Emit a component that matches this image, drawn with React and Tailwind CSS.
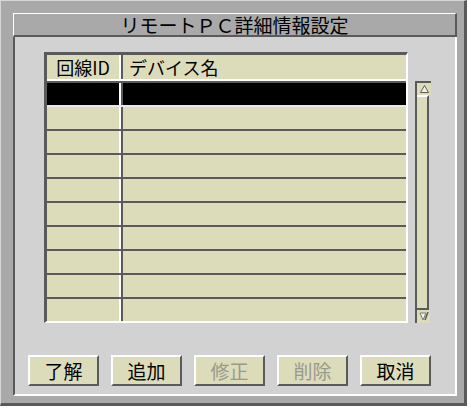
import React from 'react';

const DARK = 'border-[#5a5a5a]';

function Row({ selected, first }) {
  const fill = selected ? 'bg-black' : 'bg-[#dcdcbb]';
  const top = first ? 'border-t-[#e8e8e8]' : 'border-t-[#5a5a5a]';
  return (
    <div className={`flex h-[24px] border-t-2 ${top}`}>
      <div className={`w-[74px] border-r-2 border-white ${fill}`} />
      <div className={`flex-1 border-l-2 ${DARK} ${fill}`} />
    </div>
  );
}

function Btn({ label, disabled }) {
  return (
    <div
      className={`w-[71px] h-[31px] flex items-center justify-center bg-[#dcdcbb] border-t-2 border-l-2 border-white border-r-2 border-b-2 border-r-[#5a5a5a] border-b-[#5a5a5a] text-[19px] leading-none ${
        disabled ? 'text-[#9a9a8c]' : 'text-black'
      }`}
    >
      {label}
    </div>
  );
}

export default function App() {
  const rows = Array.from({ length: 10 }, (_, i) => i);
  return (
    <div className="w-[471px] h-[410px] bg-white font-['Noto_Sans_CJK_JP',sans-serif]">
      <div className="w-[467px] h-[406px] flex flex-col bg-[#a9a9a9] border-t border-l border-[#d6d6d6] border-r-[3px] border-b-[3px] border-r-[#5a5a5a] border-b-[#5a5a5a] pl-[12px] pt-[12px] pr-[7px] pb-[7px]">
        {/* title bar */}
        <div className="h-[24px] flex items-center justify-center bg-[#a9a9a9] border-t border-l border-white border-r-2 border-b-2 border-r-[#5a5a5a] border-b-[#5a5a5a] text-[19px] leading-none text-black">
          リモートＰＣ詳細情報設定
        </div>

        {/* content */}
        <div className="flex-1 flex flex-col bg-[#d2d2d2] border-l-2 border-l-[#5a5a5a] border-r-2 border-b-2 border-r-white border-b-white">
          <div className="flex items-start gap-[7px] pl-[29px] pt-[15px]">
            {/* table */}
            <div className="w-[364px] bg-white border-t-[3px] border-l-[3px] border-t-[#5a5a5a] border-l-[#5a5a5a] border-r-2 border-b-2 border-r-white border-b-white">
              <div className="flex h-[24px]">
                <div className="w-[74px] border-r-2 border-white bg-[#dcdcbb] flex items-center justify-center text-[18px] leading-none">
                  回線ID
                </div>
                <div className={`flex-1 border-l-2 ${DARK} bg-[#dcdcbb] flex items-center pl-[6px] text-[18px] leading-none`}>
                  デバイス名
                </div>
              </div>
              <div className="h-[2px] bg-white" />
              {rows.map((i) => (
                <Row key={i} selected={i === 0} first={i === 1} />
              ))}
            </div>

            {/* scrollbar */}
            <div className="mt-[29px] w-[16px] h-[242px] flex flex-col bg-[#d2d2d2] border-t-2 border-l-2 border-[#5a5a5a]">
              <div className="h-[12px] bg-[#dcdcbb] flex items-center justify-center">
                <svg width="9" height="8" viewBox="0 0 9 8">
                  <polygon points="4.5,0.5 8.5,7.5 0.5,7.5" fill="#f2f2e4" stroke="#5a5a5a" strokeWidth="1" />
                </svg>
              </div>
              <div className="flex-1 mr-[2px] bg-[#dcdcbb] border-t-2 border-white border-r-2 border-b-2 border-r-[#5a5a5a] border-b-[#5a5a5a]" />
              <div className="h-[13px] mr-[1px] bg-[#dcdcbb] flex items-center justify-center">
                <svg width="10" height="9" viewBox="0 0 10 9">
                  <polygon points="1,1 7,1 4,8" fill="#f2f2e4" stroke="#7a7a7a" strokeWidth="1" />
                  <line x1="9" y1="0" x2="6" y2="8" stroke="#5a5a5a" strokeWidth="1.5" />
                </svg>
              </div>
            </div>
          </div>

          {/* buttons */}
          <div className="flex gap-[12px] pl-[13px] mt-[32px]">
            <Btn label="了解" />
            <Btn label="追加" />
            <Btn label="修正" disabled />
            <Btn label="削除" disabled />
            <Btn label="取消" />
          </div>
        </div>
      </div>
    </div>
  );
}
